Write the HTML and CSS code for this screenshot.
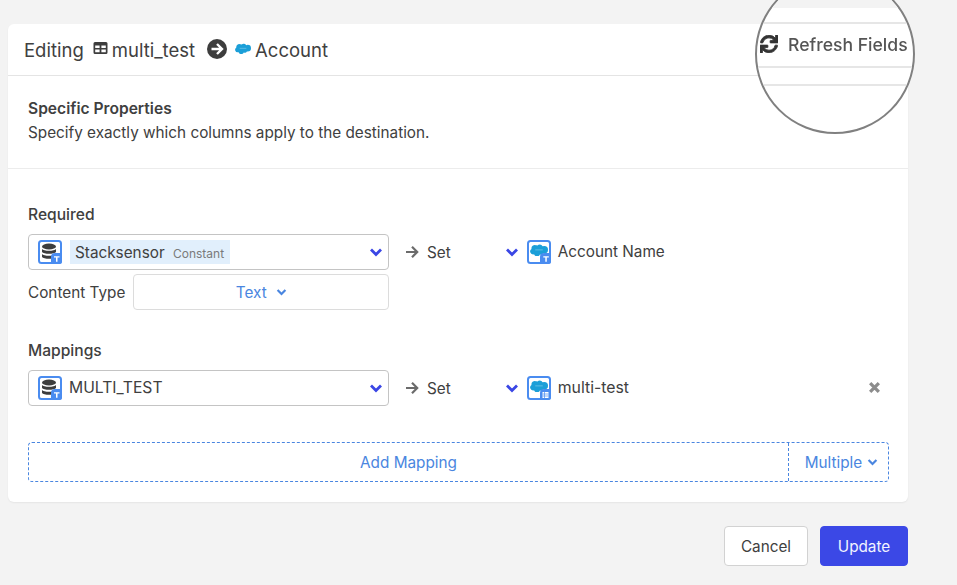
FILE: index.html
```html
<!DOCTYPE html>
<html lang="en">
<head>
    <meta charset="utf-8" />
    <title>Edit Sync</title>
    <link rel="stylesheet" href="styles.css">
</head>
<body>
    <svg class="defs" width="0" height="0">
        <symbol id="cloud" viewBox="0 0 24 17">
            <path d="M10 3.2A4.2 4.2 0 0 1 13 2a4.3 4.3 0 0 1 3.8 2.2A5 5 0 0 1 19 3.700a5 5 0 0 1 0 10 5 5 0 0 1-1.100-.1 3.600 3.600 0 0 1-4.700 1.500 4.200 4.200 0 0 1-7.800-.2A3.800 3.800 0 0 1 4 15a3.900 3.900 0 0 1-2-7.200A4.400 4.400 0 0 1 8 2.900 4 4 0 0 1 10 3.200z" fill="#1b9fd8"/>
            <path d="M7 9h10" stroke="#8fd3ef" stroke-width=".8"/>
        </symbol>
        <symbol id="chev" viewBox="0 0 14 10">
            <path d="M2 2.500l5 5 5-5" fill="none" stroke="currentColor" stroke-width="2.800"/>
        </symbol>
        <symbol id="arrow" viewBox="0 0 14 14">
            <path d="M1 7h11M7 1.800L12.200 7 7 12.200" fill="none" stroke="currentColor" stroke-width="2.200"/>
        </symbol>
        <symbol id="db" viewBox="0 0 24 24">
            <rect x="1" y="1" width="22" height="22" rx="2.500" fill="#fff" stroke="#4a8cf0" stroke-width="2"/>
            <ellipse cx="11" cy="6.500" rx="7" ry="3" fill="#3d3d3d"/>
            <path d="M4 9c1.500 2.400 12.500 2.400 14 0v3c-1.500 2.400-12.500 2.400-14 0zM4 14c1.500 2.400 12.500 2.400 14 0v3c-1.500 2.400-12.500 2.400-14 0z" fill="#3d3d3d"/>
            <path d="M13 24v-7a4 4 0 0 1 4-4h7v8.500a2.500 2.500 0 0 1-2.500 2.500z" fill="#4a8cf0"/>
            <path d="M16 16.200h5.500v1.300h-2v4.300h-1.500v-4.300h-2z" fill="#fff"/>
        </symbol>
        <symbol id="sf" viewBox="0 0 24 24">
            <rect x="1" y="1" width="22" height="22" rx="2.500" fill="#fff" stroke="#4a8cf0" stroke-width="2"/>
            <use href="#cloud" x="3" y="3" width="18" height="13"/>
            <path d="M13 24v-7a4 4 0 0 1 4-4h7v8.500a2.500 2.500 0 0 1-2.500 2.500z" fill="#4a8cf0"/>
        </symbol>
    </svg>

    <div class="card">
        <div class="card-head">
            <span>Editing</span>
            <svg class="ic-table" viewBox="0 0 14 12"><path fill-rule="evenodd" d="M1.500 0h11A1.500 1.500 0 0 1 14 1.500v9a1.500 1.500 0 0 1-1.500 1.500h-11A1.500 1.500 0 0 1 0 10.500v-9A1.500 1.500 0 0 1 1.500 0zM1.700 3.500v2.400h4.400V3.500zM7.900 3.500v2.400h4.400V3.500zM1.700 7.400v2.900h4.400V7.400zM7.900 7.400v2.900h4.400V7.400z" fill="#3d3d3d"/></svg>
            <span>multi_test</span>
            <svg class="ic-go" viewBox="0 0 20 20"><circle cx="10" cy="10" r="10" fill="#3d3d3d"/><path d="M4.500 10h10M10 5l5 5-5 5" fill="none" stroke="#fff" stroke-width="2.400"/></svg>
            <svg class="ic-cloud"><use href="#cloud"/></svg>
            <span>Account</span>
        </div>

        <div class="intro">
            <div class="intro-title">Specific Properties</div>
            <div>Specify exactly which columns apply to the destination.</div>
        </div>

        <div class="form">
            <div class="label">Required</div>
            <div class="map-row">
                <div class="select">
                    <svg class="field-ic"><use href="#db"/></svg>
                    <span class="tag">Stacksensor <small>Constant</small></span>
                    <svg class="chev"><use href="#chev"/></svg>
                </div>
                <svg class="arrow"><use href="#arrow"/></svg>
                <span class="set">Set</span>
                <svg class="chev chev-dest"><use href="#chev"/></svg>
                <svg class="field-ic"><use href="#sf"/><path d="M17.800 16.200h5.500v1.300h-2v4.300h-1.500v-4.300h-2z" fill="#fff" transform="translate(-1.500)"/></svg>
                <span class="dest">Account Name</span>
            </div>
            <div class="type-row">
                <span>Content Type</span>
                <div class="type-box">Text <svg class="chev-sm"><use href="#chev"/></svg></div>
            </div>

            <div class="label label-map">Mappings</div>
            <div class="map-row">
                <div class="select">
                    <svg class="field-ic"><use href="#db"/></svg>
                    <span class="plain">MULTI_TEST</span>
                    <svg class="chev"><use href="#chev"/></svg>
                </div>
                <svg class="arrow"><use href="#arrow"/></svg>
                <span class="set">Set</span>
                <svg class="chev chev-dest"><use href="#chev"/></svg>
                <svg class="field-ic"><use href="#sf"/><path d="M15.500 16h6v6h-6z" fill="#fff"/><path d="M15.500 18h6M15.500 20h6M17.500 16v6" stroke="#4a8cf0" stroke-width=".7"/></svg>
                <span class="dest dest-map">multi-test</span>
                <svg class="remove" viewBox="0 0 12 12"><path d="M2 2l8 8M10 2l-8 8" stroke="#8c8c8c" stroke-width="3"/></svg>
            </div>

            <div class="add-row">
                <div class="add-main">Add Mapping</div>
                <div class="add-multi">Multiple <svg class="chev-sm"><use href="#chev"/></svg></div>
            </div>
        </div>
    </div>

    <div class="actions">
        <button class="btn">Cancel</button>
        <button class="btn btn-primary">Update</button>
    </div>

    <!-- magnifier over the top right corner -->
    <div class="lens">
        <div class="lens-top"></div>
        <div class="lens-gap"></div>
        <div class="lens-row">
            <svg class="ic-sync" viewBox="0 0 512 512"><path fill="#333" stroke="#333" stroke-width="24" d="M440.650 12.570l4 82.770A247.160 247.160 0 0 0 255.830 8C134.730 8 33.910 94.920 12.290 209.820A12 12 0 0 0 24.090 224h49.050a12 12 0 0 0 11.670-9.260 175.910 175.910 0 0 1 317-56.940l-101.460-4.860a12 12 0 0 0-12.570 12v47.410a12 12 0 0 0 12 12H500a12 12 0 0 0 12-12V12a12 12 0 0 0-12-12h-47.370a12 12 0 0 0-11.980 12.570zM255.830 432a175.610 175.610 0 0 1-146-77.800l101.800 4.870a12 12 0 0 0 12.570-12v-47.400a12 12 0 0 0-12-12H12a12 12 0 0 0-12 12V500a12 12 0 0 0 12 12h47.350a12 12 0 0 0 12-12.600l-4.150-82.570A247.170 247.170 0 0 0 255.830 504c121.110 0 221.930-86.920 243.550-201.820a12 12 0 0 0-11.800-14.180h-49.050a12 12 0 0 0-11.670 9.260A175.860 175.860 0 0 1 255.830 432z"/></svg>
            <span>Refresh Fields</span>
        </div>
        <div class="lens-gap2"></div>
    </div>
</body>
</html>
```

FILE: styles.css
```css
body {
    margin: 0;
    padding: 24px 0 0 8px;
    background-color: #f3f3f3;
    font-family: Inter, "Liberation Sans", sans-serif;
    font-size: 15.3px;
    color: #404040;
    overflow: hidden;
}

.defs {
    position: absolute;
}

.card {
    width: 900px;
    height: 478px;
    background: #fff;
    border-radius: 6px;
    box-shadow: 0 1px 2px rgba(0, 0, 0, .06);
}

.card-head {
    display: flex;
    align-items: center;
    height: 51px;
    padding-left: 16px;
    border-bottom: 1px solid #e4e4e4;
    font-size: 18.5px;
}

.ic-table {
    width: 15px;
    height: 12px;
    margin: -3px 4px 0 9px;
}

.ic-go {
    width: 20px;
    height: 20px;
    margin: -2px 8px 0 12px;
}

.ic-cloud {
    width: 16px;
    height: 12px;
    margin: -3px 4px 0 0;
}

.intro {
    height: 93px;
    padding: 21px 20px 0;
    box-sizing: border-box;
    border-bottom: 1px solid #ececec;
    line-height: 24px;
}

.intro-title {
    font-size: 15.6px;
    font-weight: 600;
}

.form {
    padding: 34px 20px 0;
}

.label {
    font-size: 15.6px;
    font-weight: 500;
    line-height: 24px;
    margin-bottom: 7px;
}

.label-map {
    margin-top: 29px;
}

.map-row {
    display: flex;
    align-items: center;
    height: 36px;
}

.select {
    display: flex;
    align-items: center;
    width: 361px;
    height: 36px;
    box-sizing: border-box;
    padding-left: 9px;
    border: 1px solid #c4c4c4;
    border-radius: 4px;
}

.field-ic {
    width: 24px;
    height: 24px;
    flex: none;
}

.tag {
    display: flex;
    align-items: baseline;
    height: 24px;
    line-height: 25px;
    margin-left: 8px;
    padding: 0 5px;
    width: 160px;
    box-sizing: border-box;
    background: #e1effc;
    white-space: pre;
}

.tag small {
    margin-left: 4px;
    font-size: 12px;
    color: #7a7a7a;
}

.plain {
    margin: -2px 0 0 7px;
    font-size: 15.7px;
}

.chev {
    width: 14px;
    height: 10px;
    margin-left: auto;
    margin-right: 5px;
    color: #3a46e5;
}

.arrow {
    width: 14px;
    height: 14px;
    margin-left: 16px;
    color: #6b6b6b;
}

.set {
    margin-left: 8px;
}

.chev-dest {
    margin: 0 8px 0 54px;
}

.dest {
    margin: -2px 0 0 7px;
}

.dest-map {
    font-size: 15.8px;
}

.remove {
    width: 13px;
    height: 13px;
    margin: -2px 7px 0 auto;
}

.type-row {
    display: flex;
    align-items: center;
    margin-top: 4px;
    gap: 8px;
}

.type-box {
    display: flex;
    align-items: center;
    justify-content: center;
    gap: 9px;
    width: 256px;
    height: 36px;
    box-sizing: border-box;
    border: 1px solid #dcdcdc;
    border-radius: 4px;
    color: #4a86e0;
}

.chev-sm {
    width: 11px;
    height: 8px;
    color: #4a86e0;
}

.add-row {
    display: flex;
    width: 861px;
    height: 40px;
    margin-top: 36px;
    box-sizing: border-box;
    border: 1px dashed #4a86e0;
    border-radius: 4px;
    color: #4a86e0;
}

.add-main {
    flex: 1;
    text-align: center;
    line-height: 40px;
}

.add-multi {
    display: flex;
    align-items: center;
    justify-content: center;
    gap: 5px;
    width: 100px;
    padding-left: 6px;
    box-sizing: border-box;
    border-left: 1px dashed #4a86e0;
}

.actions {
    display: flex;
    justify-content: flex-end;
    gap: 12px;
    width: 900px;
    margin-top: 24px;
}

.btn {
    width: 84px;
    height: 40px;
    padding: 0;
    background: #fff;
    border: 1px solid #d2d2d2;
    border-radius: 4px;
    font-family: inherit;
    font-size: 15.3px;
    color: #404040;
}

.btn-primary {
    width: 88px;
    background: #3b48e6;
    border-color: #3b48e6;
    color: #f2f3ff;
}

.lens {
    position: absolute;
    left: 755px;
    top: -26px;
    width: 160px;
    height: 160px;
    box-sizing: border-box;
    border: 2px solid #808080;
    border-radius: 50%;
    overflow: hidden;
    background: #fff;
}

.lens-top {
    height: 32px;
    background: #f3f3f3;
}

.lens-gap {
    height: 14px;
    border-bottom: 2px solid #e6e6e6;
}

.lens-row {
    display: flex;
    align-items: center;
    gap: 10px;
    height: 40px;
    padding: 0 0 2px 3px;
    border-bottom: 2px solid #e6e6e6;
    font-size: 17.6px;
    font-weight: 500;
    color: #555;
    white-space: nowrap;
    filter: blur(.5px);
}

.ic-sync {
    width: 18px;
    height: 18px;
    flex: none;
}

.lens-gap2 {
    height: 16px;
    border-bottom: 2px solid #e6e6e6;
}
```
